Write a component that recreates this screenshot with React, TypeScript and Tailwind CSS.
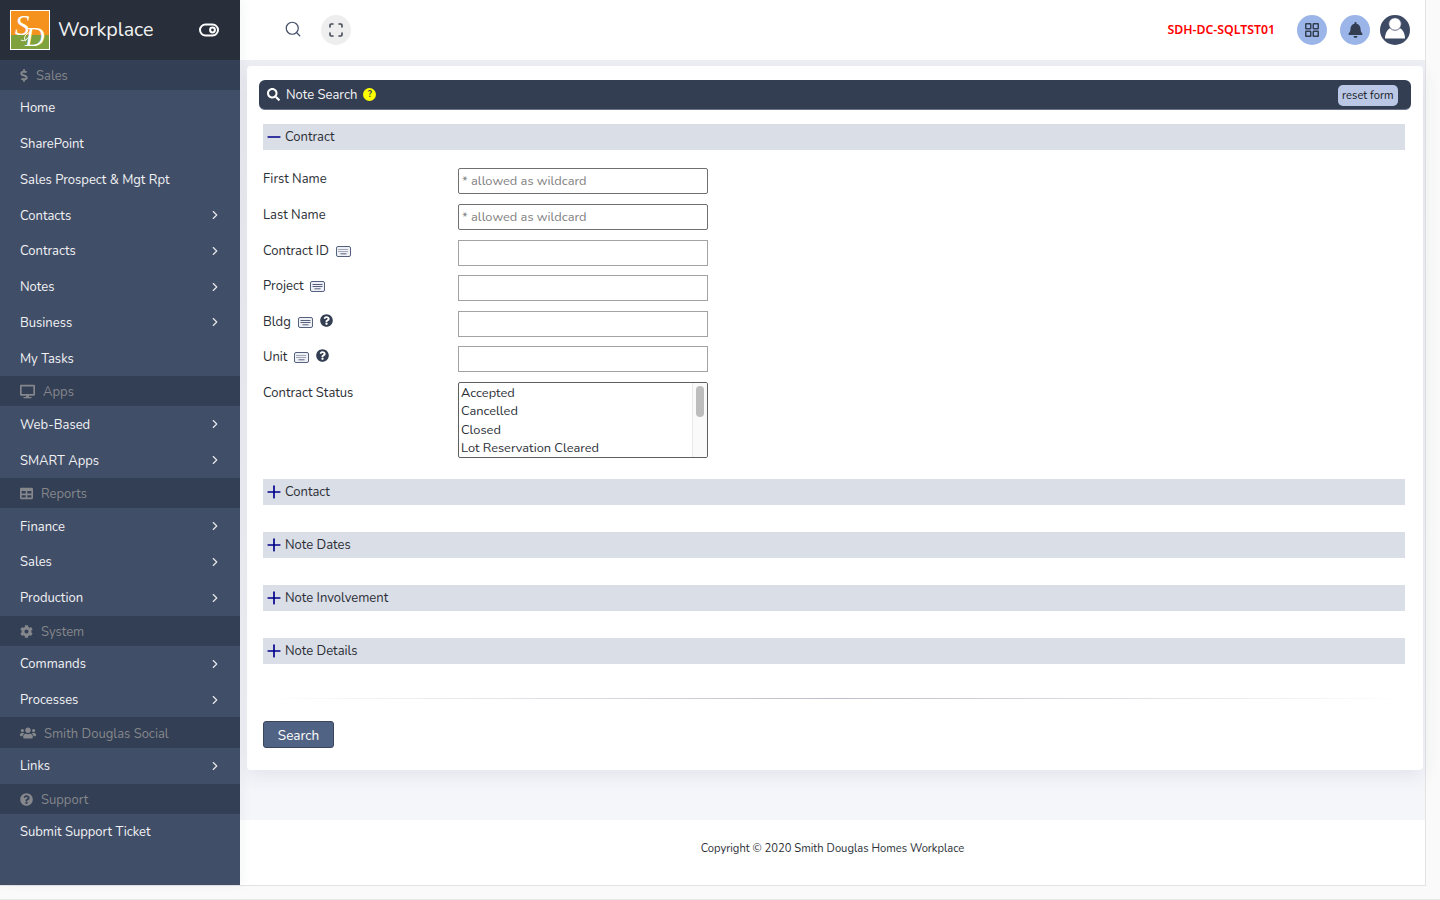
import React from "react";
import { ChevronRight, Search, Plus, Minus } from "lucide-react";
import { FaDollarSign, FaDesktop, FaTable, FaCog, FaUsers, FaQuestionCircle, FaSearch, FaBell } from "react-icons/fa";

type Row = { t: "s"; label: string; icon: React.ReactNode; gap: string } | { t: "i"; label: string; arrow?: boolean };

const rows: Row[] = [
  { t: "s", label: "Sales", icon: <FaDollarSign className="w-[8px] h-[13px]" />, gap: "gap-[8px]" },
  { t: "i", label: "Home" },
  { t: "i", label: "SharePoint" },
  { t: "i", label: "Sales Prospect & Mgt Rpt" },
  { t: "i", label: "Contacts", arrow: true },
  { t: "i", label: "Contracts", arrow: true },
  { t: "i", label: "Notes", arrow: true },
  { t: "i", label: "Business", arrow: true },
  { t: "i", label: "My Tasks" },
  { t: "s", label: "Apps", icon: <FaDesktop className="w-[15px] h-[15px]" />, gap: "gap-2" },
  { t: "i", label: "Web-Based", arrow: true },
  { t: "i", label: "SMART Apps", arrow: true },
  { t: "s", label: "Reports", icon: <FaTable className="w-[13px] h-[13px]" />, gap: "gap-2" },
  { t: "i", label: "Finance", arrow: true },
  { t: "i", label: "Sales", arrow: true },
  { t: "i", label: "Production", arrow: true },
  { t: "s", label: "System", icon: <FaCog className="w-[13px] h-[13px]" />, gap: "gap-2" },
  { t: "i", label: "Commands", arrow: true },
  { t: "i", label: "Processes", arrow: true },
  { t: "s", label: "Smith Douglas Social", icon: <FaUsers className="w-[16px] h-[16px]" />, gap: "gap-2" },
  { t: "i", label: "Links", arrow: true },
  { t: "s", label: "Support", icon: <FaQuestionCircle className="w-[13px] h-[13px]" />, gap: "gap-2" },
  { t: "i", label: "Submit Support Ticket" },
];

function Logo() {
  return (
    <svg width="40" height="40" viewBox="0 0 40 40" className="shrink-0">
      <rect width="40" height="40" fill="#fff" />
      <rect x="1" y="1" width="38" height="24" fill="#f5921e" />
      <rect x="1" y="25" width="38" height="14" fill="#7fa23c" />
      <text x="5" y="25" fontFamily="'Liberation Serif', serif" fontStyle="italic" fontSize="29" fill="#fff">S</text>
      <text x="15" y="36" fontFamily="'Liberation Serif', serif" fontStyle="italic" fontSize="27" fill="#fff">D</text>
      <path d="M11 30c3 2 7-1 9-5 1-2-1-3-3-1-3 2-3 6-1 7" fill="none" stroke="#fff" strokeWidth="1" />
    </svg>
  );
}

function Sidebar() {
  return (
    <aside className="relative z-10 w-[240px] shrink-0 bg-[#414e68] flex flex-col text-[13px] shadow-[3px_0_10px_rgba(60,70,100,0.05)]">
      <div className="h-[60px] bg-[#282f3b] flex items-center pl-[10px] pr-[21px] shrink-0">
        <Logo />
        <span className="ml-2 text-[19.7px] text-[#f2f2f2] flex-1">Workplace</span>
        <svg width="20" height="14" viewBox="0 0 20 14" fill="none" stroke="#fff" strokeWidth="2">
          <rect x="1" y="1.5" width="18" height="11" rx="5.5" />
          <circle cx="13.5" cy="7" r="2.4" />
        </svg>
      </div>
      {rows.map((r, i) =>
        r.t === "s" ? (
          <div key={i} className={`${i === 0 ? "h-[30px]" : "h-[30.4px] pt-[1px]"} bg-[#333f54] flex items-center pl-[20px] text-[#85878c] shrink-0 ${r.gap}`}>
            {r.icon}
            <span className={i === 0 ? "pt-[4px]" : "pt-[3px]"}>{r.label}</span>
          </div>
        ) : (
          <div key={i} className="h-[35.75px] flex items-center pl-[20px] pr-[18px] text-[#f1f2f4] shrink-0">
            <span className="flex-1 pt-[2.5px]">{r.label}</span>
            {r.arrow && <ChevronRight className="w-[14px] h-[14px] text-[#e8e9ec]" strokeWidth={2} />}
          </div>
        )
      )}
    </aside>
  );
}

function Header() {
  return (
    <header className="h-[60px] bg-white flex items-center shrink-0 pl-[44px] pr-[15px]">
      <Search className="w-[18px] h-[18px] text-[#414e68] -mt-[2px]" strokeWidth={1.6} />
      <div className="ml-[19px] w-[30px] h-[30px] rounded-full bg-[#eeeeee] flex items-center justify-center">
        <svg width="14" height="14" viewBox="0 0 14 14" fill="none" stroke="#444b58" strokeWidth="1.6" strokeLinecap="round">
          <path d="M1 4V2.2A1.2 1.2 0 0 1 2.2 1H4M10 1h1.8A1.2 1.2 0 0 1 13 2.2V4M13 10v1.8a1.2 1.2 0 0 1-1.2 1.2H10M4 13H2.2A1.2 1.2 0 0 1 1 11.8V10" />
        </svg>
      </div>
      <div className="flex-1" />
      <span className="text-[12.3px] font-semibold text-[#ff0000] mr-[22px] font-['Noto_Sans',sans-serif]">SDH-DC-SQLTST01</span>
      <div className="w-[30px] h-[30px] rounded-full bg-[#9bb5e8] flex items-center justify-center">
        <svg width="14" height="14" viewBox="0 0 14 14" fill="none" stroke="#343e52" strokeWidth="1.5">
          <rect x="0.75" y="0.75" width="5" height="5" rx="0.5" />
          <rect x="8.25" y="0.75" width="5" height="5" rx="0.5" />
          <rect x="0.75" y="8.25" width="5" height="5" rx="0.5" />
          <rect x="8.25" y="8.25" width="5" height="5" rx="0.5" />
        </svg>
      </div>
      <div className="ml-[13px] w-[30px] h-[30px] rounded-full bg-[#9bb5e8] flex items-center justify-center">
        <FaBell className="w-[15px] h-[16px] text-[#343e52]" />
      </div>
      <div className="ml-[10px] w-[30px] h-[30px] rounded-full bg-[#3d4a64] overflow-hidden">
        <svg width="30" height="30" viewBox="0 0 30 30">
          <path d="M5 23.5c0-6 3-10 6-10.500h8c3 .5 6 4.500 6 10.500z" fill="#fff" />
          <circle cx="15" cy="9" r="6.300" fill="#fff" stroke="#3d4a64" strokeWidth="0.8" />
        </svg>
      </div>
    </header>
  );
}

function KeyIcon({ lines }: { lines?: boolean }) {
  return (
    <svg width="15" height="11" viewBox="0 0 15 11" fill="#eef0f5" stroke="#56627d" className="shrink-0">
      <rect x="0.5" y="0.5" width="14" height="10" rx="1.5" />
      {lines ? (
        <>
          <path d="M2.500 3.500h10M2.500 5.500h10" fill="none" strokeWidth="1" />
          <path d="M4.500 7.800h6" fill="none" strokeWidth="1" />
        </>
      ) : (
        <>
          <path d="M2.500 3.500h10M2.500 5.500h10" fill="none" strokeWidth="1" strokeDasharray="1 1" />
          <path d="M4.500 7.800h6" fill="none" strokeWidth="1" />
        </>
      )}
    </svg>
  );
}
function Help() {
  return <FaQuestionCircle className="w-[13px] h-[13px] text-[#343e52] -mt-[4px]" />;
}

function Field({ label, extra, ph, h }: { label: string; extra?: React.ReactNode; ph?: string; h: string }) {
  return (
    <div className={`flex shrink-0 ${h}`}>
      <div className="w-[195px] flex items-center gap-[7px] h-[22px] pt-[1px] text-[13px] text-[#2b2f36]">
        <span>{label}</span>
        {extra}
      </div>
      <input
        readOnly
        placeholder={ph}
        className={`w-[250px] h-[26px] border bg-white px-[3px] pt-[1px] text-[12.8px] placeholder:text-[#808080] outline-none ${ph ? "border-[#707070] rounded-[2px]" : "border-[#a3a3a3]"}`}
      />
    </div>
  );
}

function Bar({ label, open, className }: { label: string; open?: boolean; className: string }) {
  return (
    <div className={`h-[25.6px] bg-[#dadee7] flex items-center text-[13px] text-[#2b2f36] shrink-0 ${className}`}>
      {open ? (
        <Minus className="w-[20px] h-[20px] text-[#00008b] ml-[0.5px]" strokeWidth={2} />
      ) : (
        <Plus className="w-[20px] h-[20px] text-[#00008b] ml-[0.5px]" strokeWidth={2} />
      )}
      <span className="ml-[1.5px] pt-[1px]">{label}</span>
    </div>
  );
}

function Card() {
  return (
    <div className="ml-[7px] mr-[2px] h-[704px] bg-white rounded-[4px] shadow-[0_6px_18px_rgba(60,70,100,0.09)] pt-[14px] pl-[12px] pr-[12px] flex flex-col">
      <div className="h-[30px] rounded-[6px] bg-[#343e52] flex items-center pl-[8px] pr-[13px] border-b border-[#6b7488] text-white text-[13px] shrink-0">
        <FaSearch className="w-[13px] h-[13px]" />
        <span className="ml-[6px] pt-[2px] text-[#f4f4f6]">Note Search</span>
        <span className="ml-[6px] w-[13px] h-[13px] rounded-full bg-[#ffff00] text-[#343e52] text-[9px] font-bold flex items-center justify-center">?</span>
        <div className="flex-1" />
        <span className="mt-[2px] h-[21px] px-[4.500px] pt-[2px] flex items-center rounded-[5px] bg-[#bac8e6] text-[11.2px] text-[#16181d]">reset form</span>
      </div>
      <div className="ml-[4px] mr-[6px] flex flex-col flex-1">
        <Bar label="Contract" open className="mt-[14px]" />
        <div className="mt-[18.4px] flex flex-col">
          <Field h="h-[36px]" label="First Name" ph="* allowed as wildcard" />
          <Field h="h-[36px]" label="Last Name" ph="* allowed as wildcard" />
          <Field h="h-[35px]" label="Contract ID" extra={<KeyIcon />} />
          <Field h="h-[36px]" label="Project" extra={<KeyIcon lines />} />
          <Field h="h-[35px]" label="Bldg" extra={<><KeyIcon lines /><Help /></>} />
          <Field h="h-[36px]" label="Unit" extra={<><KeyIcon /><Help /></>} />
          <div className="flex h-[76px]">
            <div className="w-[195px] h-[22px] pt-[1px] flex items-center text-[13px] text-[#2b2f36]">Contract Status</div>
            <div className="w-[250px] h-[76px] border border-[#5f5f5f] rounded-[2px] flex overflow-hidden bg-white text-[12.8px] text-[#2b2f36] leading-[18.5px]">
              <div className="flex-1 pl-[2px] pt-[1px]">
                <div>Accepted</div>
                <div>Cancelled</div>
                <div>Closed</div>
                <div>Lot Reservation Cleared</div>
              </div>
              <div className="w-[15px] bg-[#fafafa] border-l border-[#e8e8e8] pt-[3px] pl-[3px]">
                <div className="w-[8px] h-[31px] rounded-[4px] bg-[#bdbdbd]" />
              </div>
            </div>
          </div>
        </div>
        <Bar label="Contact" className="mt-[21.100px]" />
        <Bar label="Note Dates" className="mt-[27.5px]" />
        <Bar label="Note Involvement" className="mt-[27.5px]" />
        <Bar label="Note Details" className="mt-[27.5px]" />
        <div className="mt-[34px] h-px bg-gradient-to-r from-transparent via-[#bdbdc9] to-transparent shrink-0" />
        <div className="mt-[22px]">
          <button className="w-[71px] h-[27px] bg-[#516385] border border-[#3a465e] rounded-[3px] text-[13.5px] text-white pt-[4px]">Search</button>
        </div>
      </div>
    </div>
  );
}

export default function App() {
  return (
    <div className="w-[1440px] h-[900px] overflow-hidden bg-[#fafafa] border-b border-[#e8e8e8] font-['Nunito','Noto_Sans',sans-serif]">
      <div className="w-[1426px] h-[886px] flex border-r border-b border-[#e3e3e3]">
        <Sidebar />
        <main className="flex-1 flex flex-col min-w-0">
          <Header />
          <div className="h-[760px] bg-gradient-to-b from-[#eeeff4] to-[#f5f6fa] pt-[6px] shrink-0">
            <Card />
          </div>
          <footer className="flex-1 bg-white text-[11.2px] text-[#2b2f36] text-center pt-[21px]">
            Copyright © 2020 Smith Douglas Homes Workplace
          </footer>
        </main>
      </div>
    </div>
  );
}
